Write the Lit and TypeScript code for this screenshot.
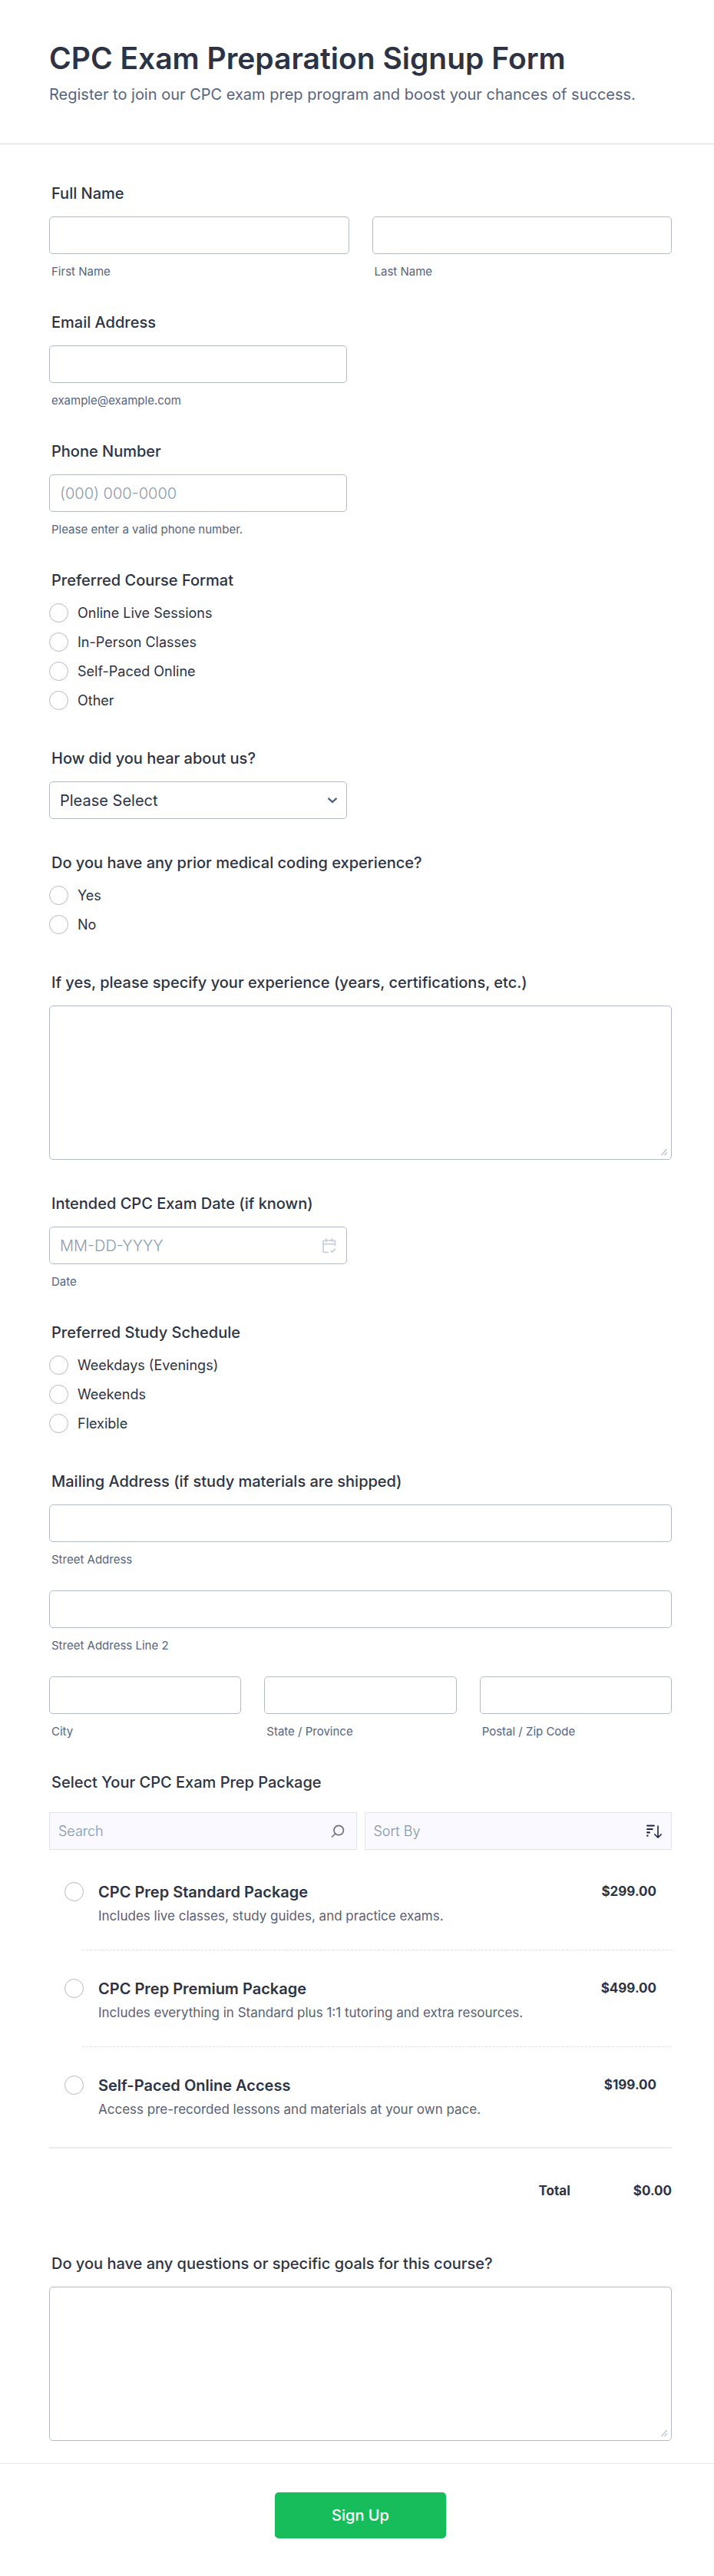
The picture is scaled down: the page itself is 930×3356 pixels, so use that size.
import { LitElement, html, css, svg } from "lit";
import { customElement, state } from "lit/decorators.js";

interface Pack { id: string; name: string; text: string; price: number; }

const PACKS: Pack[] = [
  { id: "standard", name: "CPC Prep Standard Package", text: "Includes live classes, study guides, and practice exams.", price: 299 },
  { id: "premium", name: "CPC Prep Premium Package", text: "Includes everything in Standard plus 1:1 tutoring and extra resources.", price: 499 },
  { id: "self", name: "Self-Paced Online Access", text: "Access pre-recorded lessons and materials at your own pace.", price: 199 },
];

const money = (n: number) => `$${n.toFixed(2)}`;

const chevron = html`<svg class="chevron" viewBox="0 0 14 9" aria-hidden="true">
  ${svg`<path d="M1.5 1.8 7 6.8l5.5-5" fill="none" stroke="#57647e" stroke-width="2.4"/>`}</svg>`;

const calendar = html`<svg class="calendar" viewBox="0 0 18 20" aria-hidden="true">
  ${svg`<g fill="none" stroke="#c3cad8" stroke-width="1.6" stroke-linecap="round" stroke-linejoin="round">
    <path d="M16.500 9.500V5a2 2 0 0 0-2-2H3a2 2 0 0 0-2 2v12a1.500 1.500 0 0 0 1.500 1.500H7.500M1 7.800h15.500M5 1v3.800M12.500 1v3.800M11 16.500l1.800 1.800 3.700-4"/></g>`}</svg>`;

const magnifier = html`<svg class="magnifier" viewBox="0 0 18 18" aria-hidden="true">
  ${svg`<g fill="none" stroke="#706e80" stroke-width="1.7" stroke-linecap="round">
    <circle cx="10.200" cy="7.500" r="6.200"/><path d="M5.800 12 1.500 16"/></g>`}</svg>`;

const sorter = html`<svg class="sorter" viewBox="0 0 20 18" aria-hidden="true">
  ${svg`<g fill="none" stroke="#1c2347" stroke-width="2.2" stroke-linecap="round" stroke-linejoin="round">
    <path d="M1.200 1.500h8.600M1.200 6h6.400M1.200 10.300h2.600M1.200 14.600h.4"/>
    <path d="M15 2v14.500M10.800 12.800 15 17l4.200-4.200" stroke-width="1.600"/></g>`}</svg>`;

@customElement("app-root")
export class AppRoot extends LitElement {
  @state() private picked = "";

  static styles = css`
    :host {
      display: block;
      font-family: Inter, "Liberation Sans", sans-serif;
      color: #2c3345;
      background: #fff;
    }
    * { box-sizing: border-box; }
    .header {
      padding: 51px 55px 49px 64px;
      border-bottom: 1px solid #d3d7e0;
    }
    h1 { margin: 0; font-size: 39px; line-height: 50px; font-weight: 600; }
    .intro { margin: 7px 0 0; font-size: 20px; line-height: 30px; color: #57647e; }
    .fields { padding: 52px 55px 29px 64px; display: grid; gap: 45px; }
    .field { margin: 0; padding: 0; border: 0; min-width: 0; }
    .title {
      display: block;
      padding: 0 0 0 3px;
      margin: 0 0 18px;
      font-size: 20px;
      line-height: 24px;
      font-weight: 500;
    }
    .half { max-width: 388px; }
    .row { display: grid; grid-auto-flow: column; grid-auto-columns: minmax(0, 1fr); gap: 30px; }
    .stack { display: grid; gap: 31px; }
    .box {
      display: block;
      width: 100%;
      height: 49px;
      padding: 0 13px;
      border: 1px solid #b5bac9;
      border-radius: 5px;
      background: #fff;
      color: #2c3345;
      font: 400 20px/24px Inter, sans-serif;
      appearance: none;
    }
    .box::placeholder { color: #8b9bb0; font-weight: 300; opacity: 1; }
    .area { height: 201px; padding: 12px; resize: vertical; }
    .area::-webkit-resizer {
      background: url("data:image/svg+xml,%3Csvg xmlns='http://www.w3.org/2000/svg' viewBox='0 0 15 15'%3E%3Cpath d='M2.500 10 9.500 2M6.500 10 9.500 6.500' fill='none' stroke='%23b8bfd0' stroke-width='1.200'/%3E%3C/svg%3E") no-repeat;
    }
    .sub { display: block; padding: 0 0 0 3px; margin-top: 14px; font-size: 15px; line-height: 18px; color: #57647e; }
    .holder { display: grid; align-items: center; }
    .holder > * { grid-area: 1 / 1; }
    .holder > svg { justify-self: end; pointer-events: none; }
    .chevron { width: 14px; height: 9px; margin-right: 12px; }
    .calendar { width: 18px; height: 20px; margin-right: 14px; }
    .magnifier { width: 18px; height: 18px; margin-right: 16px; }
    .sorter { width: 20px; height: 18px; margin-right: 13px; }
    .options { display: grid; gap: 13px; padding-bottom: 6px; }
    .option { display: flex; align-items: center; gap: 12px; font-size: 18px; line-height: 25px; }
    .radio {
      appearance: none;
      flex: none;
      width: 25px;
      height: 25px;
      margin: 0;
      border: 1px solid #b5bac9;
      border-radius: 50%;
      background: #fff;
    }
    .radio:checked { border: 8px solid #18bd5b; }
    .tools { display: grid; grid-template-columns: 1fr 1fr; gap: 10px; padding-top: 9px; }
    .tool {
      width: 100%;
      height: 49px;
      padding: 0 11px;
      border: 1px solid #dfe4ee;
      border-radius: 0;
      background: #f9f9ff;
      color: #8394a9;
      font: 300 18px/22px Inter, sans-serif;
      appearance: none;
    }
    .tool::placeholder { color: #8394a9; opacity: 1; }
    .packs { padding-top: 5px; border-bottom: 2px solid #eaebf2; }
    .pack { display: grid; grid-template-columns: 25px minmax(0, 1fr) auto; column-gap: 19px; padding: 37px 20px 0; }
    .packtext { display: grid; gap: 6px; }
    .packname { font-size: 20px; line-height: 26px; font-weight: 600; }
    .packinfo { font-size: 17px; line-height: 24px; color: #5b6072; }
    .price { font-size: 17px; line-height: 24px; font-weight: 700; }
    .rule { margin-left: 43px; height: 33px; border-bottom: 1px dashed #e0e2ee; }
    .last { height: 37px; }
    .total { display: flex; justify-content: flex-end; gap: 82px; padding: 43px 0 26px; font-size: 17px; line-height: 24px; font-weight: 700; }
    .footer { display: flex; justify-content: center; padding: 37px 55px 49px 64px; border-top: 1px solid #e6e8f1; }
    .submit {
      min-width: 223px;
      height: 60px;
      border: 0;
      border-radius: 5px;
      background: #18bd5b;
      color: #fff;
      font: 500 20px/24px Inter, sans-serif;
    }
  `;

  private choices(title: string, name: string, items: string[]) {
    return html`<fieldset class="field">
      <legend class="title">${title}</legend>
      <div class="options">
        ${items.map((t) => html`<label class="option"><input class="radio" type="radio" name=${name} />${t}</label>`)}
      </div>
    </fieldset>`;
  }

  private entry(id: string, caption: string) {
    return html`<div>
      <input class="box" id=${id} type="text" /><label class="sub" for=${id}>${caption}</label>
    </div>`;
  }

  private pack(p: Pack, i: number) {
    return html`<div class="pack">
        <input class="radio" type="radio" name="pack" id=${p.id} .checked=${this.picked === p.id}
          @change=${() => (this.picked = p.id)} />
        <div class="packtext">
          <label class="packname" for=${p.id}>${p.name}</label>
          <div class="packinfo">${p.text}</div>
        </div>
        <div class="price">${money(p.price)}</div>
      </div>
      ${i < PACKS.length - 1 ? html`<div class="rule"></div>` : html`<div class="last"></div>`}`;
  }

  render() {
    const total = PACKS.find((p) => p.id === this.picked)?.price ?? 0;
    return html`<form @submit=${(e: Event) => e.preventDefault()}>
      <header class="header">
        <h1>CPC Exam Preparation Signup Form</h1>
        <p class="intro">Register to join our CPC exam prep program and boost your chances of success.</p>
      </header>
      <div class="fields">
        <fieldset class="field">
          <legend class="title">Full Name</legend>
          <div class="row">${this.entry("first", "First Name")}${this.entry("last", "Last Name")}</div>
        </fieldset>
        <div class="field">
          <label class="title" for="email">Email Address</label>
          <input class="box half" id="email" type="email" />
          <span class="sub">example@example.com</span>
        </div>
        <div class="field">
          <label class="title" for="phone">Phone Number</label>
          <input class="box half" id="phone" type="tel" placeholder="(000) 000-0000" />
          <span class="sub">Please enter a valid phone number.</span>
        </div>
        ${this.choices("Preferred Course Format", "format", ["Online Live Sessions", "In-Person Classes", "Self-Paced Online", "Other"])}
        <div class="field">
          <label class="title" for="source">How did you hear about us?</label>
          <div class="holder half">
            <select class="box" id="source"><option>Please Select</option></select>${chevron}
          </div>
        </div>
        ${this.choices("Do you have any prior medical coding experience?", "prior", ["Yes", "No"])}
        <div class="field">
          <label class="title" for="details">If yes, please specify your experience (years, certifications, etc.)</label>
          <textarea class="box area" id="details"></textarea>
        </div>
        <div class="field">
          <label class="title" for="date">Intended CPC Exam Date (if known)</label>
          <div class="holder half">
            <input class="box" id="date" type="text" placeholder="MM-DD-YYYY" />${calendar}
          </div>
          <span class="sub">Date</span>
        </div>
        ${this.choices("Preferred Study Schedule", "schedule", ["Weekdays (Evenings)", "Weekends", "Flexible"])}
        <fieldset class="field">
          <legend class="title">Mailing Address (if study materials are shipped)</legend>
          <div class="stack">
            ${this.entry("street", "Street Address")}
            ${this.entry("street2", "Street Address Line 2")}
            <div class="row">
              ${this.entry("city", "City")}${this.entry("state", "State / Province")}${this.entry("zip", "Postal / Zip Code")}
            </div>
          </div>
        </fieldset>
        <fieldset class="field">
          <legend class="title">Select Your CPC Exam Prep Package</legend>
          <div class="tools">
            <div class="holder">
              <input class="tool" type="search" placeholder="Search" aria-label="Search" />${magnifier}
            </div>
            <div class="holder">
              <select class="tool" aria-label="Sort By"><option>Sort By</option></select>${sorter}
            </div>
          </div>
          <div class="packs">${PACKS.map((p, i) => this.pack(p, i))}</div>
          <div class="total"><span>Total</span><output>${money(total)}</output></div>
        </fieldset>
        <div class="field">
          <label class="title" for="goals">Do you have any questions or specific goals for this course?</label>
          <textarea class="box area" id="goals"></textarea>
        </div>
      </div>
      <footer class="footer"><button class="submit" type="submit">Sign Up</button></footer>
    </form>`;
  }
}
